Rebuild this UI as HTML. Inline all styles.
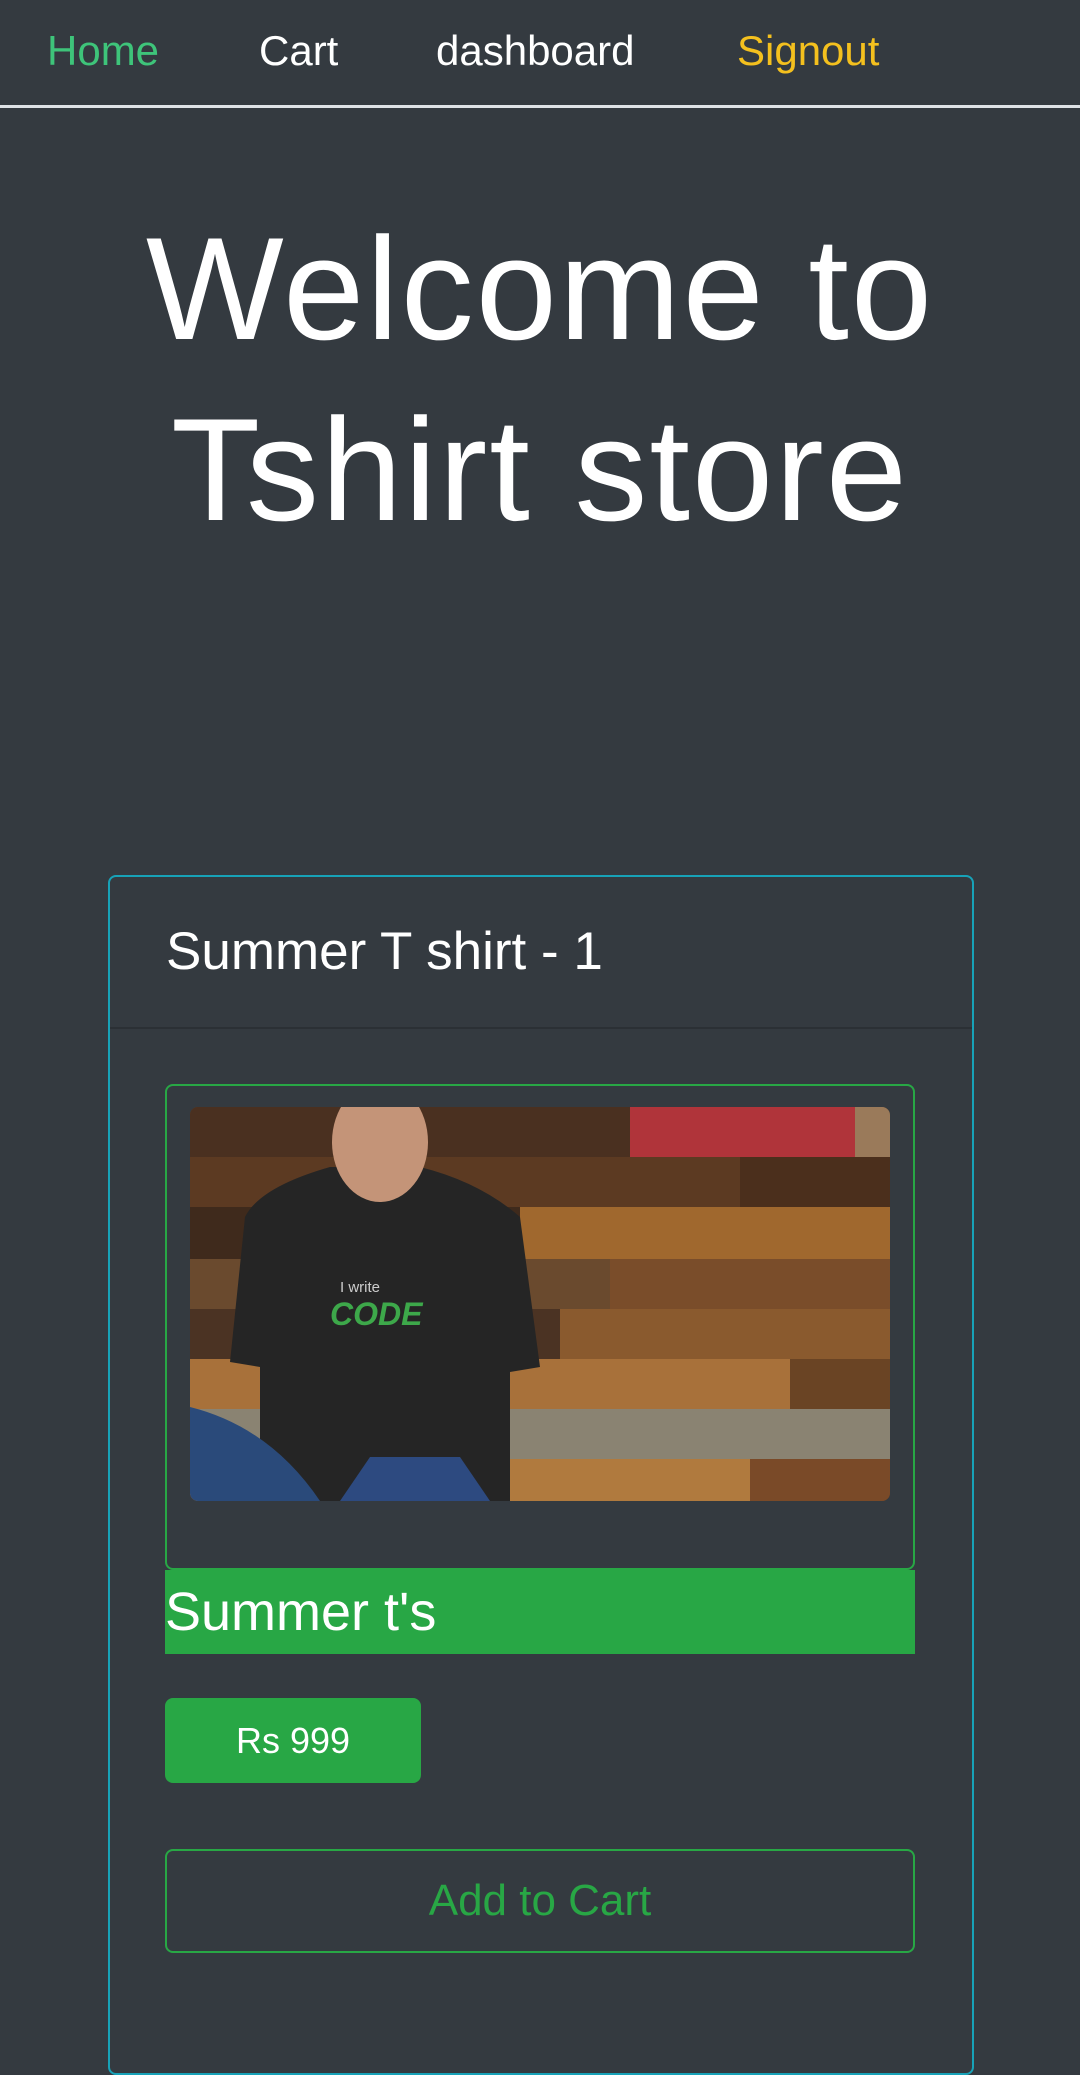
<!DOCTYPE html>
<html><head><meta charset="utf-8"><style>
*{box-sizing:border-box;margin:0;padding:0}
html,body{width:1080px;height:1956px;overflow:hidden;background:#343a40;font-family:"Liberation Sans",sans-serif;color:#fff}
.nav{position:absolute;left:0;top:0;width:1080px;height:108px;border-bottom:3px solid #dee2e6}
.nav span{position:absolute;top:26px;font-size:42px;line-height:50px}
h1{position:absolute;left:0;width:1080px;top:198px;text-align:center;font-weight:normal;font-size:146px;line-height:181px;letter-spacing:2px}
.card{position:absolute;left:108px;top:875px;width:866px;height:1200px;border:2px solid #17a2b8;border-radius:8px}
.hdr{position:absolute;left:0;top:0;width:862px;height:152px;border-bottom:2px solid #2b3035}
.hdr span{position:absolute;left:56px;top:45px;font-size:53px;line-height:60px}
.box{position:absolute;left:165px;top:1084px;width:750px;height:486px;border:2px solid #28a745;border-radius:8px}
.img{position:absolute;left:190px;top:1107px;width:700px;height:394px;border-radius:8px;overflow:hidden;background:#5a3b22}
.bar{position:absolute;left:165px;top:1570px;width:750px;height:84px;background:#28a745}
.bar span{position:absolute;left:0;top:12px;font-size:54px;line-height:60px}
.price{position:absolute;left:165px;top:1698px;width:256px;height:85px;background:#28a745;border-radius:8px;text-align:center;font-size:36px;line-height:85px}
.add{position:absolute;left:165px;top:1849px;width:750px;height:104px;border:2px solid #28a745;border-radius:8px;text-align:center;font-size:44px;line-height:100px;color:#28a745}
</style></head><body>
<div class="nav">
<span style="left:47px;color:#3ec47a">Home</span>
<span style="left:259px">Cart</span>
<span style="left:436px">dashboard</span>
<span style="left:737px;color:#f4c01e">Signout</span>
</div>
<h1>Welcome to<br>Tshirt store</h1>
<div class="card"><div class="hdr"><span>Summer T shirt - 1</span></div></div>
<div class="box"></div>
<div class="img">
<svg width="700" height="394" viewBox="0 0 700 394">
<rect width="700" height="394" fill="#6b4526"/>
<rect x="0" y="0" width="440" height="50" fill="#4a3020"/>
<rect x="440" y="0" width="225" height="50" fill="#b0343a"/>
<rect x="665" y="0" width="35" height="50" fill="#9a7a5a"/>
<rect x="0" y="50" width="550" height="50" fill="#5c3a22"/>
<rect x="550" y="50" width="150" height="50" fill="#4b2f1c"/>
<rect x="0" y="100" width="330" height="52" fill="#3f2a1c"/>
<rect x="330" y="100" width="370" height="52" fill="#a0682e"/>
<rect x="0" y="152" width="420" height="50" fill="#6a4a2e"/>
<rect x="420" y="152" width="280" height="50" fill="#7a4d2a"/>
<rect x="0" y="202" width="370" height="50" fill="#4b3323"/>
<rect x="370" y="202" width="330" height="50" fill="#8a5a2e"/>
<rect x="0" y="252" width="600" height="50" fill="#a8713a"/>
<rect x="600" y="252" width="100" height="50" fill="#6a4424"/>
<rect x="0" y="302" width="700" height="50" fill="#8a8372"/>
<rect x="0" y="352" width="560" height="42" fill="#b07a3e"/>
<rect x="560" y="352" width="140" height="42" fill="#7a4a28"/>
<path d="M55 110 Q70 80 140 60 L230 60 Q290 75 330 110 L350 260 L320 265 L320 394 L70 394 L70 260 L40 255 Z" fill="#252525"/>
<ellipse cx="190" cy="35" rx="48" ry="60" fill="#c49478"/>
<path d="M0 300 Q80 320 130 394 L0 394 Z" fill="#2a4a7a"/>
<path d="M150 394 L180 350 L270 350 L300 394 Z" fill="#2d4a80"/>
<text x="150" y="185" font-family="Liberation Sans" font-size="15" fill="#ccc">I write</text>
<text x="140" y="218" font-family="Liberation Sans" font-size="32" font-style="italic" font-weight="bold" fill="#3da84a">CODE</text>
</svg>
</div>
<div class="bar"><span>Summer t's</span></div>
<div class="price">Rs 999</div>
<div class="add">Add to Cart</div>
</body></html>
